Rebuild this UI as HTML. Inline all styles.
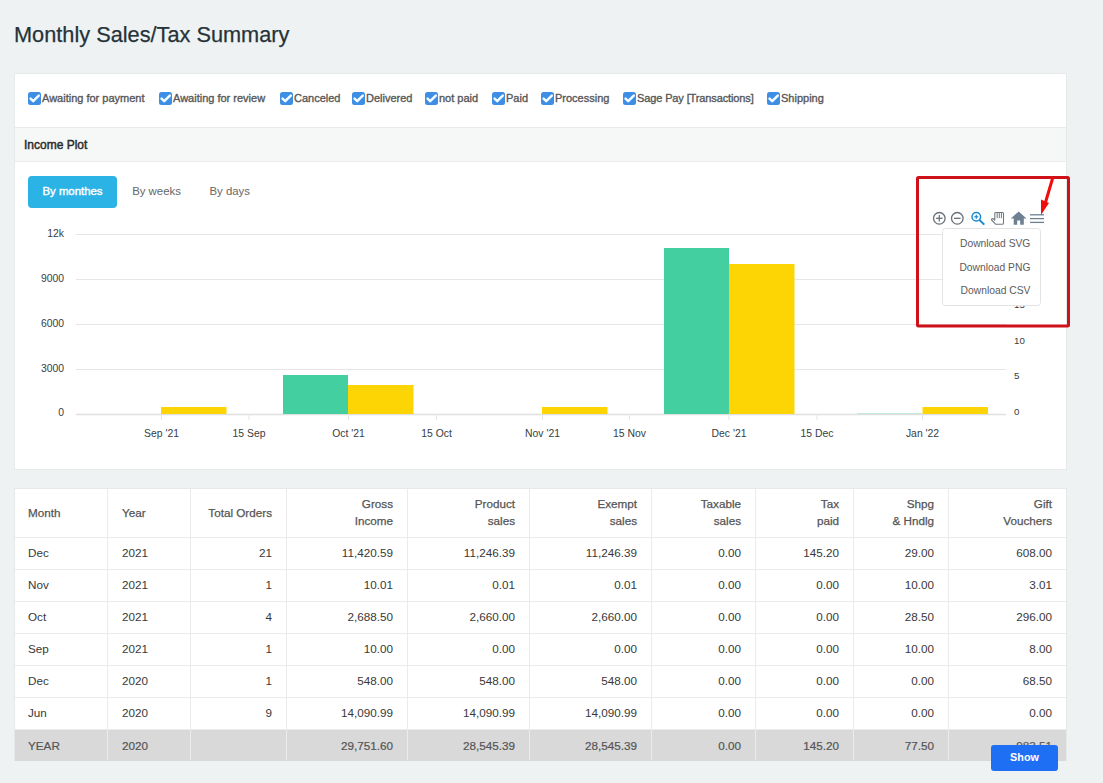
<!DOCTYPE html>
<html><head><meta charset="utf-8">
<style>
*{box-sizing:border-box;margin:0;padding:0}
html,body{width:1103px;height:783px;overflow:hidden}
body{background:#eef2f2;font-family:"Liberation Sans",sans-serif;position:relative;color:#333}
.abs{position:absolute}
h1{position:absolute;left:14px;top:19.6px;font-size:22.6px;font-weight:normal;color:#263238;line-height:30px;white-space:nowrap;transform:scaleX(0.962);transform-origin:0 0;-webkit-text-stroke:0.25px #263238}
#panel{position:absolute;left:14px;top:73px;width:1053px;height:397px;background:#fff;border:1px solid #e7eaea}
#cbrow{position:absolute;left:0;top:0;width:100%;height:54px}
.cb{position:absolute;top:18px;height:13px;white-space:nowrap;font-size:11px;color:#555;line-height:13px}
.cb i{position:absolute;left:0;top:0;width:13px;height:13px;background:#3d8ee4;border-radius:2.5px}
.cb i svg{position:absolute;left:0;top:0}
.cb span{position:absolute;left:14px;top:0;-webkit-text-stroke:0.35px #5a5a5a}
#iphdr{position:absolute;left:0;top:53px;width:100%;height:35px;background:#f6f7f7;border-top:1px solid #e9ebeb;border-bottom:1px solid #e9ebeb}
#iphdr span{position:absolute;left:9px;top:10px;font-size:12px;font-weight:normal;color:#2b2b2b;line-height:14px;-webkit-text-stroke:0.45px #2b2b2b}
.th{position:absolute;font-size:11.7px;line-height:17px;color:#555;white-space:nowrap;-webkit-text-stroke:0.25px #555}
.th.ra{text-align:right}
.td{position:absolute;font-size:11.7px;line-height:14px;color:#383838;white-space:nowrap}
.td.yr{color:#555;-webkit-text-stroke:0.2px #555}
#showbtn{position:absolute;left:991px;top:745px;width:67px;height:26px;background:#1f6ff5;border-radius:3px;color:#fff;font-weight:bold;font-size:10.8px;line-height:25.5px;text-align:center}
</style></head><body>
<h1>Monthly Sales/Tax Summary</h1>
<div id="panel">
  <div id="cbrow">
<div class="cb" style="left:13px"><i><svg width="13" height="13" viewBox="0 0 13 13"><path d="M2.6 6.6 L5.2 9.2 L10.8 3.6" fill="none" stroke="#f4fdff" stroke-width="2.5" stroke-linecap="round" stroke-linejoin="round"/></svg></i><span>Awaiting for payment</span></div>
<div class="cb" style="left:144px"><i><svg width="13" height="13" viewBox="0 0 13 13"><path d="M2.6 6.6 L5.2 9.2 L10.8 3.6" fill="none" stroke="#f4fdff" stroke-width="2.5" stroke-linecap="round" stroke-linejoin="round"/></svg></i><span>Awaiting for review</span></div>
<div class="cb" style="left:265px"><i><svg width="13" height="13" viewBox="0 0 13 13"><path d="M2.6 6.6 L5.2 9.2 L10.8 3.6" fill="none" stroke="#f4fdff" stroke-width="2.5" stroke-linecap="round" stroke-linejoin="round"/></svg></i><span>Canceled</span></div>
<div class="cb" style="left:337px"><i><svg width="13" height="13" viewBox="0 0 13 13"><path d="M2.6 6.6 L5.2 9.2 L10.8 3.6" fill="none" stroke="#f4fdff" stroke-width="2.5" stroke-linecap="round" stroke-linejoin="round"/></svg></i><span>Delivered</span></div>
<div class="cb" style="left:410px"><i><svg width="13" height="13" viewBox="0 0 13 13"><path d="M2.6 6.6 L5.2 9.2 L10.8 3.6" fill="none" stroke="#f4fdff" stroke-width="2.5" stroke-linecap="round" stroke-linejoin="round"/></svg></i><span>not paid</span></div>
<div class="cb" style="left:477px"><i><svg width="13" height="13" viewBox="0 0 13 13"><path d="M2.6 6.6 L5.2 9.2 L10.8 3.6" fill="none" stroke="#f4fdff" stroke-width="2.5" stroke-linecap="round" stroke-linejoin="round"/></svg></i><span>Paid</span></div>
<div class="cb" style="left:526px"><i><svg width="13" height="13" viewBox="0 0 13 13"><path d="M2.6 6.6 L5.2 9.2 L10.8 3.6" fill="none" stroke="#f4fdff" stroke-width="2.5" stroke-linecap="round" stroke-linejoin="round"/></svg></i><span>Processing</span></div>
<div class="cb" style="left:608px"><i><svg width="13" height="13" viewBox="0 0 13 13"><path d="M2.6 6.6 L5.2 9.2 L10.8 3.6" fill="none" stroke="#f4fdff" stroke-width="2.5" stroke-linecap="round" stroke-linejoin="round"/></svg></i><span style="letter-spacing:-0.12px">Sage Pay [Transactions]</span></div>
<div class="cb" style="left:752px"><i><svg width="13" height="13" viewBox="0 0 13 13"><path d="M2.6 6.6 L5.2 9.2 L10.8 3.6" fill="none" stroke="#f4fdff" stroke-width="2.5" stroke-linecap="round" stroke-linejoin="round"/></svg></i><span>Shipping</span></div>
  </div>
  <div id="iphdr"><span>Income Plot</span></div>
</div>
<div id="tbl" class="abs" style="left:14px;top:488px;width:1053px;height:273px;background:#fff;border:1px solid #e6e8ea"></div>
<div class="abs" style="left:15px;top:730px;width:1051px;height:31px;background:#d9d9d9"></div>
<div class="abs" style="left:107px;top:489px;width:1px;height:271px;background:#ebebeb"></div>
<div class="abs" style="left:190px;top:489px;width:1px;height:271px;background:#ebebeb"></div>
<div class="abs" style="left:286px;top:489px;width:1px;height:271px;background:#ebebeb"></div>
<div class="abs" style="left:407px;top:489px;width:1px;height:271px;background:#ebebeb"></div>
<div class="abs" style="left:529px;top:489px;width:1px;height:271px;background:#ebebeb"></div>
<div class="abs" style="left:651px;top:489px;width:1px;height:271px;background:#ebebeb"></div>
<div class="abs" style="left:755px;top:489px;width:1px;height:271px;background:#ebebeb"></div>
<div class="abs" style="left:853px;top:489px;width:1px;height:271px;background:#ebebeb"></div>
<div class="abs" style="left:948px;top:489px;width:1px;height:271px;background:#ebebeb"></div>
<div class="abs" style="left:15px;top:537px;width:1051px;height:1px;background:#ebebeb"></div>
<div class="abs" style="left:15px;top:569px;width:1051px;height:1px;background:#ebebeb"></div>
<div class="abs" style="left:15px;top:601px;width:1051px;height:1px;background:#ebebeb"></div>
<div class="abs" style="left:15px;top:633px;width:1051px;height:1px;background:#ebebeb"></div>
<div class="abs" style="left:15px;top:665px;width:1051px;height:1px;background:#ebebeb"></div>
<div class="abs" style="left:15px;top:697px;width:1051px;height:1px;background:#ebebeb"></div>
<div class="abs" style="left:15px;top:729px;width:1051px;height:1px;background:#ebebeb"></div>
<div class="th" style="left:28px;top:503.5px">Month</div>
<div class="th" style="left:122px;top:503.5px">Year</div>
<div class="th ra" style="right:831px;top:503.5px">Total Orders</div>
<div class="th ra" style="right:710px;top:494.5px">Gross<br>Income</div>
<div class="th ra" style="right:588px;top:494.5px">Product<br>sales</div>
<div class="th ra" style="right:466px;top:494.5px">Exempt<br>sales</div>
<div class="th ra" style="right:362px;top:494.5px">Taxable<br>sales</div>
<div class="th ra" style="right:264px;top:494.5px">Tax<br>paid</div>
<div class="th ra" style="right:169px;top:494.5px">Shpg<br>&amp; Hndlg</div>
<div class="th ra" style="right:51px;top:494.5px">Gift<br>Vouchers</div>
<div class="td" style="left:28px;top:546px">Dec</div>
<div class="td" style="left:122px;top:546px">2021</div>
<div class="td ra" style="right:831px;top:546px">21</div>
<div class="td ra" style="right:710px;top:546px">11,420.59</div>
<div class="td ra" style="right:588px;top:546px">11,246.39</div>
<div class="td ra" style="right:466px;top:546px">11,246.39</div>
<div class="td ra" style="right:362px;top:546px">0.00</div>
<div class="td ra" style="right:264px;top:546px">145.20</div>
<div class="td ra" style="right:169px;top:546px">29.00</div>
<div class="td ra" style="right:51px;top:546px">608.00</div>
<div class="td" style="left:28px;top:578px">Nov</div>
<div class="td" style="left:122px;top:578px">2021</div>
<div class="td ra" style="right:831px;top:578px">1</div>
<div class="td ra" style="right:710px;top:578px">10.01</div>
<div class="td ra" style="right:588px;top:578px">0.01</div>
<div class="td ra" style="right:466px;top:578px">0.01</div>
<div class="td ra" style="right:362px;top:578px">0.00</div>
<div class="td ra" style="right:264px;top:578px">0.00</div>
<div class="td ra" style="right:169px;top:578px">10.00</div>
<div class="td ra" style="right:51px;top:578px">3.01</div>
<div class="td" style="left:28px;top:610px">Oct</div>
<div class="td" style="left:122px;top:610px">2021</div>
<div class="td ra" style="right:831px;top:610px">4</div>
<div class="td ra" style="right:710px;top:610px">2,688.50</div>
<div class="td ra" style="right:588px;top:610px">2,660.00</div>
<div class="td ra" style="right:466px;top:610px">2,660.00</div>
<div class="td ra" style="right:362px;top:610px">0.00</div>
<div class="td ra" style="right:264px;top:610px">0.00</div>
<div class="td ra" style="right:169px;top:610px">28.50</div>
<div class="td ra" style="right:51px;top:610px">296.00</div>
<div class="td" style="left:28px;top:642px">Sep</div>
<div class="td" style="left:122px;top:642px">2021</div>
<div class="td ra" style="right:831px;top:642px">1</div>
<div class="td ra" style="right:710px;top:642px">10.00</div>
<div class="td ra" style="right:588px;top:642px">0.00</div>
<div class="td ra" style="right:466px;top:642px">0.00</div>
<div class="td ra" style="right:362px;top:642px">0.00</div>
<div class="td ra" style="right:264px;top:642px">0.00</div>
<div class="td ra" style="right:169px;top:642px">10.00</div>
<div class="td ra" style="right:51px;top:642px">8.00</div>
<div class="td" style="left:28px;top:674px">Dec</div>
<div class="td" style="left:122px;top:674px">2020</div>
<div class="td ra" style="right:831px;top:674px">1</div>
<div class="td ra" style="right:710px;top:674px">548.00</div>
<div class="td ra" style="right:588px;top:674px">548.00</div>
<div class="td ra" style="right:466px;top:674px">548.00</div>
<div class="td ra" style="right:362px;top:674px">0.00</div>
<div class="td ra" style="right:264px;top:674px">0.00</div>
<div class="td ra" style="right:169px;top:674px">0.00</div>
<div class="td ra" style="right:51px;top:674px">68.50</div>
<div class="td" style="left:28px;top:706px">Jun</div>
<div class="td" style="left:122px;top:706px">2020</div>
<div class="td ra" style="right:831px;top:706px">9</div>
<div class="td ra" style="right:710px;top:706px">14,090.99</div>
<div class="td ra" style="right:588px;top:706px">14,090.99</div>
<div class="td ra" style="right:466px;top:706px">14,090.99</div>
<div class="td ra" style="right:362px;top:706px">0.00</div>
<div class="td ra" style="right:264px;top:706px">0.00</div>
<div class="td ra" style="right:169px;top:706px">0.00</div>
<div class="td ra" style="right:51px;top:706px">0.00</div>
<div class="td yr" style="left:28px;top:739px">YEAR</div>
<div class="td yr" style="left:122px;top:739px">2020</div>
<div class="td yr ra" style="right:710px;top:739px">29,751.60</div>
<div class="td yr ra" style="right:588px;top:739px">28,545.39</div>
<div class="td yr ra" style="right:466px;top:739px">28,545.39</div>
<div class="td yr ra" style="right:362px;top:739px">0.00</div>
<div class="td yr ra" style="right:264px;top:739px">145.20</div>
<div class="td yr ra" style="right:169px;top:739px">77.50</div>
<div class="td yr ra" style="right:51px;top:739px">983.51</div>
<div id="showbtn">Show</div>
<svg id="chart" class="abs" style="left:0;top:0" width="1103" height="783" viewBox="0 0 1103 783">
<rect x="28" y="176" width="89" height="32" rx="4" fill="#2cb3e5"/>
<g font-family="'Liberation Sans', sans-serif" font-size="11.4px">
<text x="72.5" y="195.4" text-anchor="middle" fill="#fff" stroke="#fff" stroke-width="0.4">By monthes</text>
<text x="156.5" y="195.4" text-anchor="middle" fill="#666">By weeks</text>
<text x="229.7" y="195.4" text-anchor="middle" fill="#666">By days</text>
</g>
<g stroke="#e6e6e6" stroke-width="1">
<line x1="76" y1="234.5" x2="1006" y2="234.5"/>
<line x1="76" y1="279.5" x2="1006" y2="279.5"/>
<line x1="76" y1="324.5" x2="1006" y2="324.5"/>
<line x1="76" y1="369.5" x2="1006" y2="369.5"/>
</g>
<line x1="76" y1="414.5" x2="1006" y2="414.5" stroke="#e0e0e0" stroke-width="1.5"/>
<g stroke="#e6e6e6" stroke-width="1">
<line x1="161.5" y1="414" x2="161.5" y2="420"/>
<line x1="249" y1="414" x2="249" y2="420"/>
<line x1="348.5" y1="414" x2="348.5" y2="420"/>
<line x1="436.5" y1="414" x2="436.5" y2="420"/>
<line x1="542.5" y1="414" x2="542.5" y2="420"/>
<line x1="629.5" y1="414" x2="629.5" y2="420"/>
<line x1="729" y1="414" x2="729" y2="420"/>
<line x1="817" y1="414" x2="817" y2="420"/>
<line x1="922.5" y1="414" x2="922.5" y2="420"/>
</g>
<g fill="#fed504">
<rect x="161" y="407" width="65.5" height="7"/>
<rect x="348" y="385" width="65.5" height="29"/>
<rect x="542" y="407" width="65.5" height="7"/>
<rect x="729" y="264" width="65.5" height="150"/>
<rect x="922.5" y="407" width="65.5" height="7"/>
</g>
<g fill="#43cf9f">
<rect x="283" y="375" width="65" height="39"/>
<rect x="664" y="248" width="65" height="166"/>
<rect x="857" y="413" width="65" height="1" opacity="0.3"/>
</g>
<g font-family="'Liberation Sans', sans-serif" font-size="10.4px" fill="#373d3f">
<text x="64" y="236.5" text-anchor="end">12k</text>
<text x="64" y="281.5" text-anchor="end">9000</text>
<text x="64" y="326.5" text-anchor="end">6000</text>
<text x="64" y="371.5" text-anchor="end">3000</text>
<text x="64" y="415.5" text-anchor="end">0</text>
<g font-size="9.7px">
<text x="1014" y="414.5">0</text>
<text x="1014" y="379.3">5</text>
<text x="1014" y="343.9">10</text>
<text x="1014" y="308.3">15</text>
<text x="1014" y="272.9">20</text>
<text x="1014" y="237.5">25</text>
</g>
<text x="161.5" y="437" text-anchor="middle">Sep '21</text>
<text x="249" y="437" text-anchor="middle">15 Sep</text>
<text x="348.5" y="437" text-anchor="middle">Oct '21</text>
<text x="436.5" y="437" text-anchor="middle">15 Oct</text>
<text x="542.5" y="437" text-anchor="middle">Nov '21</text>
<text x="629.5" y="437" text-anchor="middle">15 Nov</text>
<text x="729" y="437" text-anchor="middle">Dec '21</text>
<text x="817" y="437" text-anchor="middle">15 Dec</text>
<text x="922.5" y="437" text-anchor="middle">Jan '22</text>
</g>
<!-- toolbar -->
<g fill="none" stroke="#6a7178" stroke-width="1.3">
<circle cx="939.3" cy="218.3" r="5.8"/>
<line x1="936" y1="218.3" x2="942.6" y2="218.3"/>
<line x1="939.3" y1="215" x2="939.3" y2="221.6"/>
<circle cx="957.3" cy="218.3" r="5.8"/>
<line x1="954" y1="218.3" x2="960.6" y2="218.3"/>
</g>
<g fill="none" stroke="#1d89cf" stroke-width="1.5">
<circle cx="976.3" cy="216.8" r="4.3"/>
<line x1="979.5" y1="220" x2="984.3" y2="224.6" stroke-width="2"/>
<line x1="974.3" y1="216.8" x2="978.3" y2="216.8" stroke-width="1.2"/>
<line x1="976.3" y1="214.8" x2="976.3" y2="218.8" stroke-width="1.2"/>
</g>
<g fill="none" stroke="#6f7a84" stroke-width="1.1" stroke-linejoin="round">
<path d="M995.8 224.3 L991.6 220 Q991.2 219.2 992 218.8 Q992.8 218.4 993.6 219 L994.8 220.2 L994.8 213.4 Q994.8 212.5 995.8 212.5 L1002.6 212.5 Q1003.5 212.5 1003.5 213.5 L1003.5 223 Q1003.5 224.3 1002.2 224.3 Z" fill="#fff"/>
<path d="M997.2 212.8 L997.2 218.2 M999.3 212.8 L999.3 218.2 M1001.4 212.8 L1001.4 218.2" stroke-width="1"/>
</g>
<path d="M1010.8 218.5 L1018.7 211.5 L1026.5 218.5 L1023.8 218.5 L1023.8 224.7 L1020.2 224.7 L1020.2 220.5 L1017.2 220.5 L1017.2 224.7 L1013.7 224.7 L1013.7 218.5 Z" fill="#6e8192"/>
<g stroke="#6e8192" stroke-width="1.3">
<line x1="1030" y1="214.8" x2="1044" y2="214.8"/>
<line x1="1030" y1="218.6" x2="1044" y2="218.6"/>
<line x1="1030" y1="222.4" x2="1044" y2="222.4"/>
</g>
<!-- menu -->
<rect x="942.5" y="228.5" width="98" height="77" rx="3" fill="#fff" stroke="#e3e3e3" stroke-width="1"/>
<g font-family="'Liberation Sans', sans-serif" font-size="10.3px" fill="#5c5c5c" text-anchor="end">
<text x="1030.4" y="246.7">Download SVG</text>
<text x="1030.4" y="270.9">Download PNG</text>
<text x="1030.4" y="294.2">Download CSV</text>
</g>
<!-- red annotation -->
<rect x="917.5" y="177.5" width="151" height="148.5" rx="1" fill="none" stroke="#cf1119" stroke-width="3"/>
<line x1="1053" y1="177" x2="1045" y2="204" stroke="#f20d0d" stroke-width="3"/>
<path d="M1041 199.5 L1049 203 L1041 215 Z" fill="#f20d0d"/>
</svg>
</body></html>
